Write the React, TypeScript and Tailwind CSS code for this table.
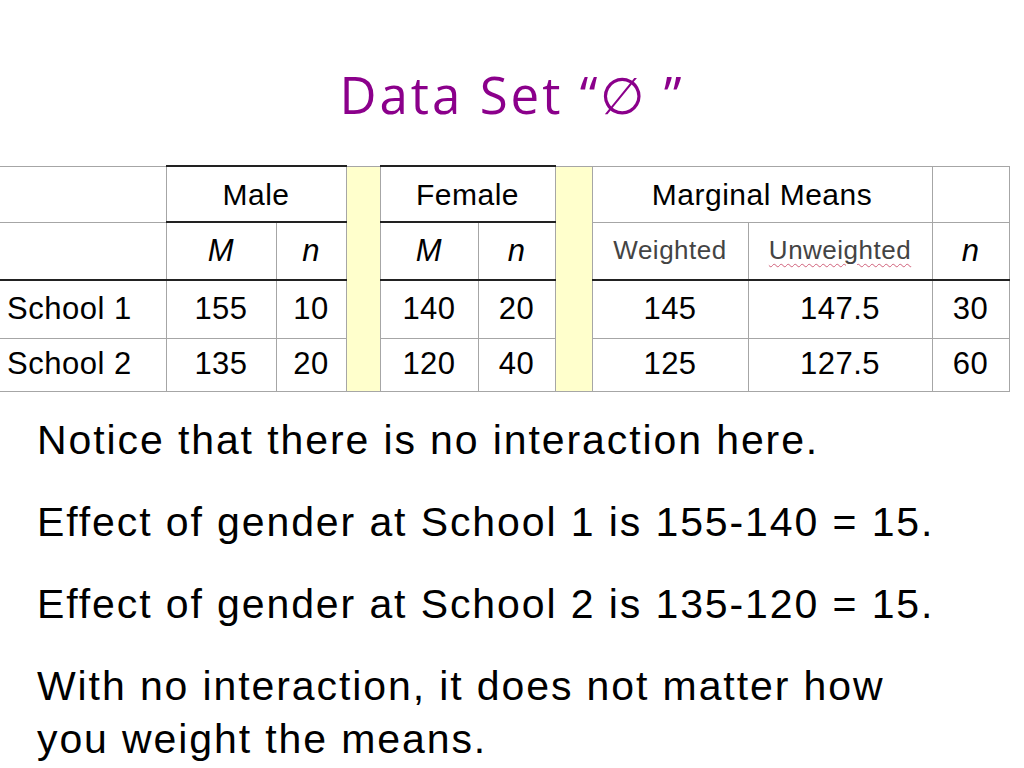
import React from "react";

const gray = "border-[#a6a6a6]";

function Cell({
  children,
  className = "",
  colSpan,
}: {
  children?: React.ReactNode;
  className?: string;
  colSpan?: number;
}) {
  return (
    <td
      colSpan={colSpan}
      className={`border ${gray} text-center align-middle p-0 ${className}`}
    >
      {children}
    </td>
  );
}

function Yellow() {
  return <td rowSpan={4} className={`border ${gray} bg-[#ffffcc] p-0`} />;
}

const rows = [
  ["School 1", "155", "10", "140", "20", "145", "147.5", "30"],
  ["School 2", "135", "20", "120", "40", "125", "127.5", "60"],
];

export default function App() {
  return (
    <div className="w-[1024px] h-[768px] bg-white overflow-hidden text-black font-['Liberation_Sans',Arial,sans-serif]">
      <h1 className="pt-[64px] h-[124px] text-center text-[51px] leading-[60px] tracking-[3px] text-[#8b008b] font-['Open_Sans',sans-serif] font-normal">
        Data Set “∅ ”
      </h1>

      <table className="mt-[41px] border-collapse table-fixed w-[1009px] text-[31px] tracking-[0.5px]">
        <colgroup>
          <col className="w-[166px]" />
          <col className="w-[110px]" />
          <col className="w-[70px]" />
          <col className="w-[34px]" />
          <col className="w-[98px]" />
          <col className="w-[77px]" />
          <col className="w-[37px]" />
          <col className="w-[156px]" />
          <col className="w-[184px]" />
          <col className="w-[77px]" />
        </colgroup>
        <tbody>
          <tr className="h-[56px]">
            <Cell className="border-l-0" />
            <Cell colSpan={2} className="text-[30px] border-t-2 border-t-[#222] border-b-2 border-b-[#222]">
              Male
            </Cell>
            <Yellow />
            <Cell colSpan={2} className="text-[30px] border-t-2 border-t-[#222] border-b-2 border-b-[#222]">
              Female
            </Cell>
            <Yellow />
            <Cell colSpan={2} className="text-[30px]">
              Marginal Means
            </Cell>
            <Cell />
          </tr>
          <tr className="h-[58px]">
            <Cell className="border-l-0 border-b-2 border-b-[#222]" />
            <Cell className="italic border-b-2 border-b-[#222]">M</Cell>
            <Cell className="italic border-b-2 border-b-[#222]">n</Cell>
            <Cell className="italic border-b-2 border-b-[#222]">M</Cell>
            <Cell className="italic border-b-2 border-b-[#222]">n</Cell>
            <Cell className="text-[26px] text-[#444] border-b-2 border-b-[#222]">Weighted</Cell>
            <Cell className="text-[26px] text-[#444] border-b-2 border-b-[#222]">
              <span className="underline decoration-wavy decoration-[#d0607a] decoration-1 underline-offset-4">
                Unweighted
              </span>
            </Cell>
            <Cell className="italic border-b-2 border-b-[#222]">n</Cell>
          </tr>
          {rows.map((r, i) => (
            <tr key={r[0]} className={i === 0 ? "h-[58px]" : "h-[53px]"}>
              <td className={`border ${gray} border-l-0 text-left pl-[7px] p-0`}>{r[0]}</td>
              {r.slice(1).map((v, j) => (
                <Cell key={j}>{v}</Cell>
              ))}
            </tr>
          ))}
        </tbody>
      </table>

      <div className="mt-[22px] pl-[37px] text-[41px] leading-[53px] tracking-[1.9px] flex flex-col gap-[29px]">
        <p>Notice that there is no interaction here.</p>
        <p>Effect of gender at School 1 is 155-140 = 15.</p>
        <p>Effect of gender at School 2 is 135-120 = 15.</p>
        <p>
          With no interaction, it does not matter how
          <br />
          you weight the means.
        </p>
      </div>
    </div>
  );
}
